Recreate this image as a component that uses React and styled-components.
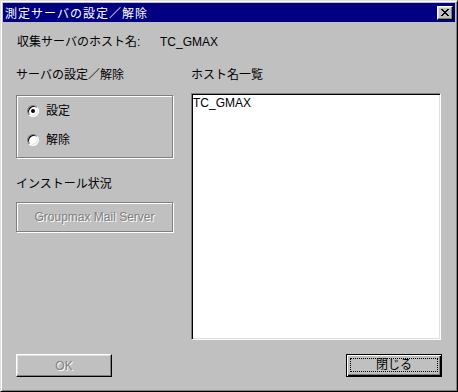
import React from "react";
import styled, { createGlobalStyle } from "styled-components";

const GlobalStyle = createGlobalStyle`
  html, body {
    margin: 0;
    padding: 0;
    background: #c0c0c0;
  }
  body {
    font: 12px "Liberation Sans", "Noto Sans CJK JP", sans-serif;
    color: #000;
  }
`;

const X_GLYPH = [
  "XX....XX",
  ".XX..XX.",
  "..XXXX..",
  "...XX...",
  "..XXXX..",
  ".XX..XX.",
  "XX....XX",
];

const CloseGlyph = () => (
  <svg width="8" height="7" viewBox="0 0 8 7" shapeRendering="crispEdges">
    {X_GLYPH.flatMap((row, y) =>
      row.split("").map((c, x) =>
        c === "X" ? <rect key={`${x}-${y}`} x={x} y={y} width="1" height="1" fill="#000" /> : null
      )
    )}
  </svg>
);

const Radio = ({ checked, label }) => (
  <RadioRow>
    <RadioCircle>{checked && <RadioDot />}</RadioCircle>
    <span>{label}</span>
  </RadioRow>
);

const App = () => {
  return (
    <>
      <GlobalStyle />
      <Window>
        <TitleBar>
          <TitleText>測定サーバの設定／解除</TitleText>
          <TitleButton>
            <CloseGlyph />
          </TitleButton>
        </TitleBar>
        <Body>
          <HostRow>
            <HostLabel>収集サーバのホスト名:</HostLabel>
            <span>TC_GMAX</span>
          </HostRow>
          <Columns>
            <Column>
              <Label>サーバの設定／解除</Label>
              <GroupBox>
                <Radio checked label="設定" />
                <Radio label="解除" />
              </GroupBox>
              <Label $top={19}>インストール状況</Label>
              <EtchedButton>Groupmax Mail Server</EtchedButton>
            </Column>
            <Column>
              <Label>ホスト名一覧</Label>
              <ListBox>
                <ListItem>TC_GMAX</ListItem>
              </ListBox>
            </Column>
          </Columns>
          <ButtonRow>
            <PushButton disabled>OK</PushButton>
            <DefaultButton>
              <FocusRing>閉じる</FocusRing>
            </DefaultButton>
          </ButtonRow>
        </Body>
      </Window>
    </>
  );
};

export default App;

const Window = styled.div`
  width: 458px;
  height: 392px;
  box-sizing: border-box;
  padding: 2px;
  border: 1px solid;
  border-color: #dfdfdf #000 #000 #dfdfdf;
  box-shadow: inset 1px 1px #fff, inset -1px -1px #808080;
  background: #c0c0c0;
  display: flex;
  flex-direction: column;
`;

const TitleBar = styled.div`
  height: 19px;
  background: #000080;
  display: flex;
  align-items: center;
  justify-content: space-between;
  padding: 0 2px 0 2px;
`;

const TitleText = styled.div`
  color: #fff;
  font-family: "Noto Sans CJK JP", sans-serif;
  font-size: 12px;
  letter-spacing: 1px;
  line-height: 14px;
`;

const TitleButton = styled.div`
  width: 16px;
  height: 14px;
  box-sizing: border-box;
  background: #c0c0c0;
  border: 1px solid;
  border-color: #fff #000 #000 #fff;
  box-shadow: inset -1px -1px #808080, inset 1px 1px #dfdfdf;
  display: flex;
  align-items: center;
  justify-content: center;
  padding: 0 0 1px 0;
`;

const Body = styled.div`
  display: flex;
  flex-direction: column;
  padding: 0 13px;
`;

const HostRow = styled.div`
  display: flex;
  align-items: center;
  margin-top: 13px;
  line-height: 14px;
  padding-left: 1px;
`;

const HostLabel = styled.span`
  width: 143px;
`;

const Columns = styled.div`
  display: grid;
  grid-template-columns: 158px 250px;
  column-gap: 17px;
  margin-top: 19px;
`;

const Column = styled.div`
  display: flex;
  flex-direction: column;
`;

const Label = styled.div`
  line-height: 14px;
  margin-top: ${(p) => p.$top || 0}px;
`;

const GroupBox = styled.div`
  margin-top: 13px;
  width: 157px;
  height: 63px;
  box-sizing: border-box;
  border: 1px solid #808080;
  box-shadow: 1px 1px 0 #fff, inset 1px 1px 0 #fff;
  display: flex;
  flex-direction: column;
  gap: 15px;
  padding: 8px 0 0 10px;
`;

const RadioRow = styled.div`
  display: flex;
  align-items: center;
  gap: 7px;
  line-height: 14px;
  height: 14px;
`;

const RadioCircle = styled.span`
  width: 12px;
  height: 12px;
  box-sizing: border-box;
  border-radius: 50%;
  background: #fff;
  border: 1px solid;
  border-color: #808080 #fff #fff #808080;
  box-shadow: inset 1px 1px #000, inset -1px -1px #dfdfdf;
  display: flex;
  align-items: center;
  justify-content: center;
`;

const RadioDot = styled.span`
  width: 4px;
  height: 4px;
  border-radius: 50%;
  background: #000;
`;

const EtchedButton = styled.div`
  margin-top: 11px;
  width: 157px;
  height: 30px;
  box-sizing: border-box;
  border: 1px solid #808080;
  box-shadow: 1px 1px 0 #fff, inset 1px 1px 0 #fff;
  display: flex;
  align-items: center;
  justify-content: center;
  color: #808080;
  text-shadow: 1px 1px 0 #fff;
`;

const ListBox = styled.div`
  margin-top: 11px;
  height: 247px;
  box-sizing: border-box;
  background: #fff;
  border: 1px solid;
  border-color: #808080 #fff #fff #808080;
  box-shadow: inset 1px 1px #000, inset -1px -1px #dfdfdf;
  padding: 2px 1px;
`;

const ListItem = styled.div`
  line-height: 14px;
`;

const ButtonRow = styled.div`
  display: flex;
  justify-content: space-between;
  margin-top: 14px;
`;

const PushButton = styled.button`
  width: 96px;
  height: 23px;
  box-sizing: border-box;
  padding: 0;
  font: inherit;
  background: #c0c0c0;
  border: 1px solid;
  border-color: #fff #000 #000 #fff;
  box-shadow: inset -1px -1px #808080, inset 1px 1px #dfdfdf;
  color: #000;
  &:disabled {
    color: #808080;
    text-shadow: 1px 1px 0 #fff;
  }
`;

const DefaultButton = styled.button`
  width: 96px;
  height: 23px;
  box-sizing: border-box;
  padding: 3px 3px 4px 3px;
  font: inherit;
  color: #000;
  background: #c0c0c0;
  border: 1px solid #000;
  box-shadow: inset 1px 1px #fff, inset -1px -1px #000, inset -2px -2px #808080;
  display: flex;
`;

const FocusRing = styled.span`
  flex: 1;
  border: 1px dotted #000;
  display: flex;
  align-items: center;
  justify-content: center;
  line-height: 12px;
`;
